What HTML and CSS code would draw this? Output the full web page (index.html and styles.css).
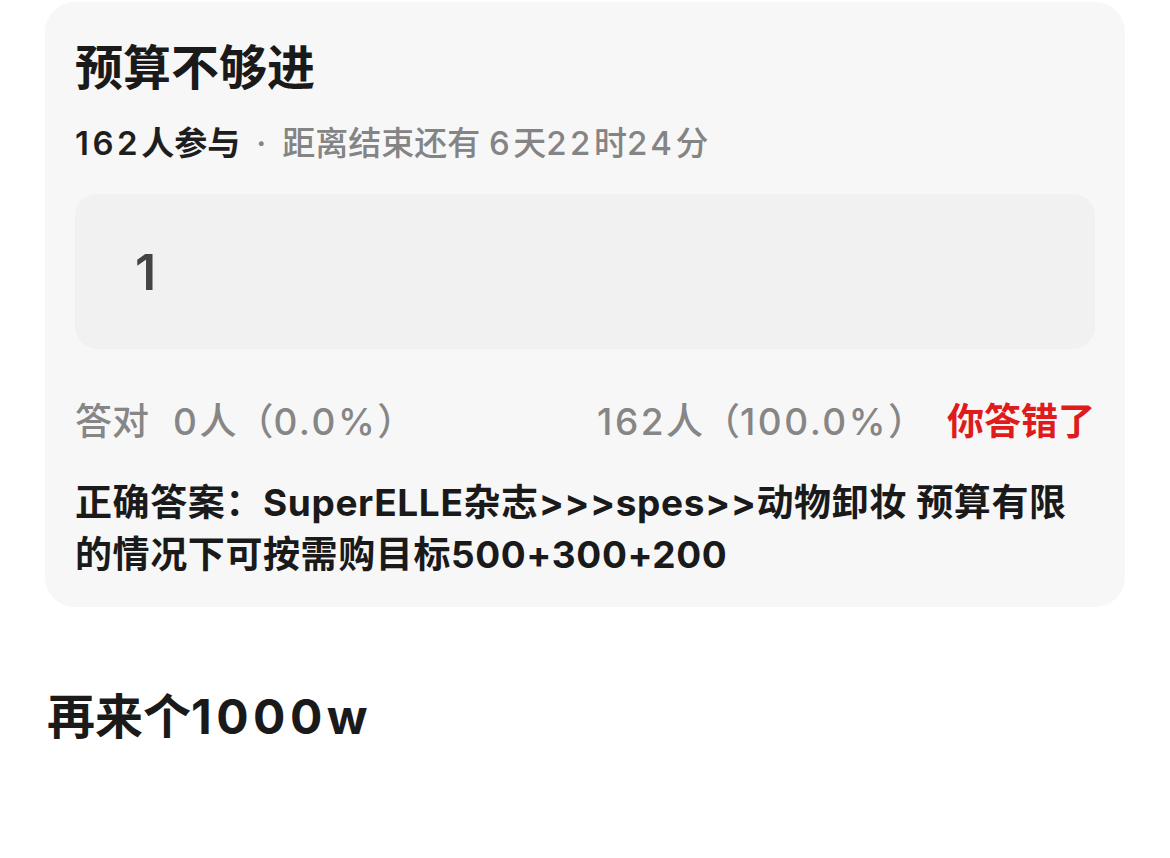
FILE: index.html
```html
<!DOCTYPE html>
<html lang="zh-CN">
<head>
<meta charset="utf-8">
<title>预算不够进</title>
<link rel="stylesheet" href="styles.css">
</head>
<body>
<div class="page">
  <section class="card">
    <h1 class="title">预算不够进</h1>
    <div class="meta"><span class="count"><span class="num">162</span>人参与</span><span class="dot">·</span><span class="rest">距离结束还有 <span class="num">6</span>天<span class="num">22</span>时<span class="num">24</span>分</span></div>
    <div class="answer-box"><span class="answer-val">1</span></div>
    <div class="stats">
      <div class="stat-left"><span class="label">答对</span><span><span class="num">0</span>人（<span class="num">0.0%</span>）</span></div>
      <div class="stat-right"><span><span class="num">162</span>人（<span class="num">100.0%</span>）</span><span class="wrong">你答错了</span></div>
    </div>
    <p class="correct">正确答案：SuperELLE杂志&gt;&gt;&gt;spes&gt;&gt;动物卸妆 预算有限的情况下可按需购目标500+300+200</p>
  </section>
  <h2 class="next">再来个<span class="num">1000w</span></h2>
</div>
</body>
</html>
```
FILE: styles.css
```css
html, body {
  margin: 0;
  padding: 0;
  background: #ffffff;
}
body {
  font-family: Inter, "Noto Sans CJK SC", sans-serif;
  color: #1a1a1a;
}
.page {
  padding-top: 2px;
}
.card {
  margin: 0 45px;
  background: #f7f7f7;
  border-radius: 30px;
  padding: 36px 30px 26px 30px;
}
.title {
  margin: 0;
  font-size: 48px;
  line-height: 60px;
  font-weight: 700;
  color: #1a1a1a;
}
.meta {
  margin-top: 23px;
  font-size: 33px;
  line-height: 44px;
  font-weight: 500;
  color: #848484;
}
.meta .num {
  letter-spacing: 3.5px;
}
.meta .count {
  color: #1e1e1e;
  font-weight: 600;
}
.meta .dot {
  margin: 0 16px 0 16px;
}
.answer-box {
  margin-top: 29px;
  height: 155px;
  background: #f1f1f1;
  border-radius: 22px;
  display: flex;
  align-items: center;
  padding-left: 60px;
}
.answer-val {
  font-size: 50px;
  font-weight: 600;
  color: #444444;
}
.stats {
  margin-top: 48px;
  display: flex;
  justify-content: space-between;
  font-size: 37px;
  line-height: 50px;
  font-weight: 500;
  color: #868686;
}
.stats .num {
  letter-spacing: 2.5px;
}
.stat-left .label {
  margin-right: 24px;
}
.wrong {
  color: #e01b1b;
  font-weight: 700;
  margin-left: 22px;
}
.correct {
  margin: 30px 0 0 0;
  font-size: 37px;
  line-height: 52px;
  font-weight: 700;
  letter-spacing: 0.6px;
  color: #1a1a1a;
}
.next {
  margin: 80px 0 0 47px;
  font-size: 48px;
  line-height: 60px;
  font-weight: 700;
  color: #1a1a1a;
}
.next .num {
  letter-spacing: 4.5px;
}
```
